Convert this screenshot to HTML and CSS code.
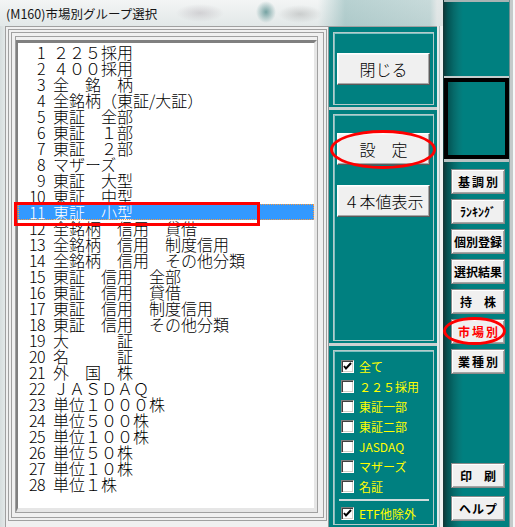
FILE: index.html
```html
<!DOCTYPE html>
<html lang="ja">
<head>
<meta charset="utf-8">
<title>(M160)市場別グループ選択</title>
<link rel="stylesheet" href="styles.css">
</head>
<body>
<div class="screen">
  <div class="dialog">
    <div class="titlebar"><span class="title">(M160)市場別グループ選択</span></div>
    <div class="frame">
      <div class="client">
        <div class="group">
          <div class="group-inner">
            <div class="listwrap">
              <div class="list">
                <div class="row"><span class="no">1</span><span class="tx">２２５採用</span></div>
                <div class="row"><span class="no">2</span><span class="tx">４００採用</span></div>
                <div class="row"><span class="no">3</span><span class="tx">全　銘　柄</span></div>
                <div class="row"><span class="no">4</span><span class="tx">全銘柄（東証/大証）</span></div>
                <div class="row"><span class="no">5</span><span class="tx">東証　全部</span></div>
                <div class="row"><span class="no">6</span><span class="tx">東証　１部</span></div>
                <div class="row"><span class="no">7</span><span class="tx">東証　２部</span></div>
                <div class="row"><span class="no">8</span><span class="tx">マザーズ</span></div>
                <div class="row"><span class="no">9</span><span class="tx">東証　大型</span></div>
                <div class="row"><span class="no">10</span><span class="tx">東証　中型</span></div>
                <div class="row sel"><span class="no">11</span><span class="tx">東証　小型</span></div>
                <div class="row"><span class="no">12</span><span class="tx">全銘柄　信用　貸借</span></div>
                <div class="row"><span class="no">13</span><span class="tx">全銘柄　信用　制度信用</span></div>
                <div class="row"><span class="no">14</span><span class="tx">全銘柄　信用　その他分類</span></div>
                <div class="row"><span class="no">15</span><span class="tx">東証　信用　全部</span></div>
                <div class="row"><span class="no">16</span><span class="tx">東証　信用　貸借</span></div>
                <div class="row"><span class="no">17</span><span class="tx">東証　信用　制度信用</span></div>
                <div class="row"><span class="no">18</span><span class="tx">東証　信用　その他分類</span></div>
                <div class="row"><span class="no">19</span><span class="tx">大　　　証</span></div>
                <div class="row"><span class="no">20</span><span class="tx">名　　　証</span></div>
                <div class="row"><span class="no">21</span><span class="tx">外　国　株</span></div>
                <div class="row"><span class="no">22</span><span class="tx">ＪＡＳＤＡＱ</span></div>
                <div class="row"><span class="no">23</span><span class="tx">単位１０００株</span></div>
                <div class="row"><span class="no">24</span><span class="tx">単位５００株</span></div>
                <div class="row"><span class="no">25</span><span class="tx">単位１００株</span></div>
                <div class="row"><span class="no">26</span><span class="tx">単位５０株</span></div>
                <div class="row"><span class="no">27</span><span class="tx">単位１０株</span></div>
                <div class="row"><span class="no">28</span><span class="tx">単位１株</span></div>
              </div>
            </div>
          </div>
        </div>
        <div class="panel">
          <div class="sec sec1">
            <div class="sec-in center">
              <div class="btn">閉じる</div>
            </div>
          </div>
          <div class="sec sec2">
            <div class="sec-in stack">
              <div class="btn">設　定</div>
              <div class="btn">４本値表示</div>
            </div>
          </div>
          <div class="sec sec3">
            <div class="sec-in checks">
              <div class="chk"><span class="box"><svg width="11" height="11" viewBox="0 0 11 11"><polyline points="2,5 4,7.5 9,2" fill="none" stroke="#000" stroke-width="2"/></svg></span><span class="lbl">全て</span></div>
              <div class="chk"><span class="box"></span><span class="lbl">２２５採用</span></div>
              <div class="chk"><span class="box"></span><span class="lbl">東証一部</span></div>
              <div class="chk"><span class="box"></span><span class="lbl">東証二部</span></div>
              <div class="chk"><span class="box"></span><span class="lbl">JASDAQ</span></div>
              <div class="chk"><span class="box"></span><span class="lbl">マザーズ</span></div>
              <div class="chk"><span class="box"></span><span class="lbl">名証</span></div>
              <div class="sep"></div>
              <div class="chk"><span class="box"><svg width="11" height="11" viewBox="0 0 11 11"><polyline points="2,5 4,7.5 9,2" fill="none" stroke="#000" stroke-width="2"/></svg></span><span class="lbl">ETF他除外</span></div>
            </div>
          </div>
        </div>
      </div>
    </div>
  </div>
  <div class="sidebar">
    <div class="sb-top"></div>
    <div class="sb-line"></div>
    <div class="sb-box"></div>
    <div class="sb-line2"></div>
    <div class="sb-buttons">
      <div class="sbtn ls2">基調別</div>
      <div class="sbtn">ﾗﾝｷﾝｸﾞ</div>
      <div class="sbtn">個別登録</div>
      <div class="sbtn">選択結果</div>
      <div class="sbtn">持　株</div>
      <div class="sbtn ls2 red">市場別</div>
      <div class="sbtn ls2">業種別</div>
      <div class="sbtn print">印　刷</div>
      <div class="sbtn ls1 help">ヘルプ</div>
    </div>
  </div>
</div>
<div class="mark mark-row"></div>
<div class="mark mark-set"></div>
<div class="mark mark-ichiba"></div>
</body>
</html>
```
FILE: styles.css
```css
* { box-sizing: border-box; margin: 0; padding: 0; }
html, body { width: 515px; height: 527px; overflow: hidden; }
body {
  font-family: "Noto Sans CJK JP", "Noto Sans", sans-serif;
  background: #e4e9e9;
  position: relative;
}
.screen { display: flex; width: 515px; height: 527px; }

/* dialog */
.dialog { width: 443px; flex: none; display: flex; flex-direction: column; }
.titlebar {
  height: 26px; flex: none; display: flex; align-items: center; padding-left: 6px;
  font-size: 12.5px; color: #151515;
  background:
    radial-gradient(24px 9px at 200px 13px, rgba(150, 140, 150, .30), transparent),
    radial-gradient(10px 11px at 266px 12px, rgba(20, 100, 100, .55), transparent),
    radial-gradient(22px 9px at 300px 14px, rgba(130, 130, 130, .30), transparent),
    linear-gradient(to right, rgba(255,255,255,0) 318px, rgba(110,165,165,.45) 345px, rgba(120,170,170,.35) 430px, rgba(220,226,226,.7) 437px),
    linear-gradient(to bottom, #f3f5f5, #e2e8e8);
}
.title { white-space: nowrap; }
.frame {
  flex: 1; display: flex; padding: 0 6px 0 5px;
  background:
    linear-gradient(to left, #eef2f2 0 3px, #b4c0c0 3px 4px, #e4eaea 4px 6px, transparent 6px),
    linear-gradient(to right, #d6dddd, #e3e8e8 5px);
}
.client {
  flex: 1; display: flex; background: #f0f0f0;
  border-top: 1px solid #a0a0a0; border-left: 1px solid #a0a0a0;
}
.group {
  width: 319px; flex: none; margin: 2px 1px 6px 2px;
  border: 1px solid #a0a0a0; padding: 2px; display: flex;
}
.group-inner {
  flex: 1; display: flex; border: 1px solid #a0a0a0;
  padding: 3px 5px 4px 3px;
}
.listwrap { flex: 1; display: flex; border: 1px solid #a0a0a0; padding-top: 3px; }
.list {
  flex: 1; background: #fff;
  border-style: solid; border-width: 3px 3px 4px 2px;
  border-color: #808080 #e6e6e6 #e6e6e6 #808080;
  padding: 1px 0 0 0;
  font-size: 16px; font-weight: 300; color: #000;
}
.row { display: flex; height: 16px; line-height: 16px; padding-left: 11px; white-space: pre; }
.no { width: 16px; text-align: right; margin-right: 8px; flex: none; letter-spacing: -0.5px; }
.tx { white-space: pre; }
.row.sel { background: #3399ff; color: #fff; outline: 1px dotted #ff9a3c; outline-offset: -1px; }

/* teal panel */
.panel {
  width: 109px; flex: none; display: flex; flex-direction: column; gap: 3px;
  background: #cdd2d2; border-left: 1px solid #909898;
}
.sec { background: #008080; padding: 4px 3px 2px 4px; display: flex; }
.sec1 { height: 80px; padding-top: 5px; }
.sec2 { height: 233px; }
.sec3 { flex: 1; }
.sec-in {
  flex: 1; display: flex; flex-direction: column;
  border: 1px solid #b6caca; box-shadow: inset 1px 1px 0 rgba(230, 245, 245, .55);
}
.center { justify-content: center; align-items: center; }
.stack { align-items: center; padding-top: 18px; gap: 20px; }
.btn {
  width: 93px; height: 32px; background: #f0f0f0;
  border: 1px solid; border-color: #ffffff #5a5a5a #5a5a5a #ffffff;
  box-shadow: inset -1px -1px 0 #a8a8a8, inset 1px 1px 0 #f8f8f8;
  font-size: 16px; font-weight: 300; line-height: 30px; text-align: center; color: #000;
}

.checks { padding: 9px 0 0 7px; gap: 7px; }
.chk { display: flex; align-items: center; height: 13px; gap: 5px; }
.box {
  width: 13px; height: 13px; flex: none; background: #fff;
  border: 1px solid; border-color: #808080 #ffffff #ffffff #808080;
  box-shadow: inset 1px 1px 0 #404040, inset -1px -1px 0 #d4d0c8;
  display: flex; align-items: center; justify-content: center;
}
.box svg { display: block; }
.lbl { font-size: 12px; line-height: 13px; color: #ffff00; white-space: nowrap; }
.sep { height: 2px; margin: -1px 4px -1px -2px; background: #cfdcdc; }

/* parent sidebar */
.sidebar {
  width: 72px; flex: none; display: flex; flex-direction: column;
  border-left: 1px solid #163838; padding-right: 6px;
  background:
    linear-gradient(to left, #f6f8f8 0 2px, #c4caca 2px 5px, #6f9090 5px 6px, transparent 6px),
    linear-gradient(to right, #0c3a3a 0, #035454 4px, #066a6a 10px, #067878 15px, #008080 19px);
}
.sb-top { height: 76px; flex: none; border-top: 2px solid #a8b4b4; }
.sb-line { height: 2px; flex: none; background: #c4cccc; }
.sb-box { height: 81px; flex: none; border: 4px solid #000; }
.sb-line2 { height: 3px; flex: none; background: #b8c2c2; }
.sb-buttons { display: flex; flex-direction: column; gap: 5px; padding: 7px 0 0 7px; }
.sbtn {
  width: 54px; height: 25px; background: #f0f0f0;
  border: 1px solid #8a8a8a;
  box-shadow: inset 1px 1px 0 #ffffff, inset -1px -1px 0 #a6a6a6;
  font-size: 12px; font-weight: bold; line-height: 23px; text-align: center;
  color: #000; white-space: nowrap;
}
.ls1 { letter-spacing: 1px; text-indent: 1px; }
.ls2 { letter-spacing: 2px; text-indent: 2px; }
.red { color: #ff0000; }
.print { margin-top: 84px; }
.help { margin-top: 3px; }

/* annotation overlays */
.mark { position: absolute; border: 3px solid #ff0000; pointer-events: none; }
.mark-row { left: 14px; top: 202px; width: 246px; height: 24px; }
.mark-set { left: 330px; top: 130px; width: 106px; height: 39px; border-radius: 50%; }
.mark-ichiba { left: 443px; top: 317px; width: 63px; height: 28px; border-radius: 50%; }
```
